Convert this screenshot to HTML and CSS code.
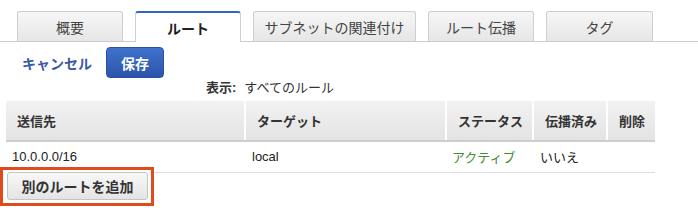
FILE: index.html
```html
<!DOCTYPE html>
<html lang="ja">
<head>
<meta charset="utf-8">
<link rel="stylesheet" href="styles.css">
</head>
<body>
<div class="tabs">
  <div class="tab w106">概要</div>
  <div class="tab w106 active">ルート</div>
  <div class="tab w163">サブネットの関連付け</div>
  <div class="tab w106">ルート伝播</div>
  <div class="tab w107">タグ</div>
</div>
<div class="actions">
  <a class="cancel">キャンセル</a>
  <button class="save">保存</button>
</div>
<div class="filter"><b>表示:</b><span>すべてのルール</span></div>
<table class="routes">
  <thead>
    <tr>
      <th class="c1">送信先</th>
      <th class="c2">ターゲット</th>
      <th class="c3">ステータス</th>
      <th class="c4">伝播済み</th>
      <th class="c5">削除</th>
    </tr>
  </thead>
  <tbody>
    <tr>
      <td>10.0.0.0/16</td>
      <td>local</td>
      <td class="active-status">アクティブ</td>
      <td>いいえ</td>
      <td></td>
    </tr>
  </tbody>
</table>
<div class="add-wrap">
  <button class="add">別のルートを追加</button>
</div>
</body>
</html>
```
FILE: styles.css
```css
html, body {
  margin: 0;
  padding: 0;
  background: #fff;
  font-family: "Liberation Sans", "Noto Sans CJK JP", sans-serif;
  color: #333;
}
.tabs {
  display: flex;
  gap: 12px;
  padding: 11px 0 0 17px;
  border-bottom: 1px solid #cccccc;
  height: 30px;
}
.tab {
  box-sizing: border-box;
  height: 30px;
  border: 1px solid #cfcfcf;
  border-bottom: none;
  border-radius: 3px 3px 0 0;
  background: linear-gradient(#f6f6f6, #e6e6e6);
  font-size: 14px;
  color: #444;
  display: flex;
  align-items: center;
  justify-content: center;
}
.tab.active {
  background: #fff;
  border-top: 2px solid #3366c0;
  height: 31px;
  margin-bottom: -1px;
  font-weight: bold;
  color: #222;
  padding-top: 1px;
}
.w106 { width: 106px; }
.w107 { width: 107px; }
.w163 { width: 163px; }
.actions {
  display: flex;
  align-items: center;
  padding: 5px 0 0 22px;
  gap: 14px;
}
.cancel {
  font-size: 14px;
  font-weight: bold;
  color: #3b57a8;
}
.save {
  width: 58px;
  height: 31px;
  border: 1px solid #2a51a0;
  border-radius: 4px;
  background: linear-gradient(#3f72cc, #2c55a9);
  color: #fff;
  font-family: inherit;
  font-size: 14px;
  font-weight: bold;
  padding: 0;
}
.filter {
  padding-left: 206px;
  font-size: 13px;
  color: #333;
  height: 23px;
  line-height: 19px;
}
.filter b { margin-right: 8px; }
.routes {
  margin-left: 6px;
  border-collapse: collapse;
  width: 649px;
  font-size: 13px;
}
.routes th {
  height: 40px;
  box-sizing: border-box;
  background: linear-gradient(#f2f2f2, #e3e3e3);
  border-left: 2px solid #fff;
  border-bottom: 2px solid #cdcdcd;
  text-align: left;
  padding: 0 0 0 11px;
  font-weight: bold;
  color: #333;
}
.routes th:first-child { border-left: none; }
.routes th.c1 { width: 239px; }
.routes th.c2 { width: 201px; }
.routes th.c3 { width: 87px; }
.routes th.c4 { width: 74px; }
.routes th.c5 { width: 48px; }
.routes td {
  height: 31px;
  box-sizing: border-box;
  padding: 0 0 0 7px;
  border-bottom: 1px solid #dddddd;
  color: #222;
}
.routes td:first-child { padding-left: 6px; }
.routes td.active-status { color: #3d8e2e; padding-left: 6px; }
.add-wrap {
  display: inline-block;
  margin-top: -6px;
  border: 3px solid #e04a1c;
  padding: 2px 3px 3px 4px;
  background: #fff;
  position: relative;
}
.add {
  display: block;
  width: 141px;
  height: 28px;
  border: 1px solid #c4c4c4;
  border-radius: 3px;
  background: linear-gradient(#f8f8f8, #e4e4e4);
  font-family: inherit;
  font-size: 14px;
  font-weight: bold;
  color: #333;
  padding: 0;
}
```
